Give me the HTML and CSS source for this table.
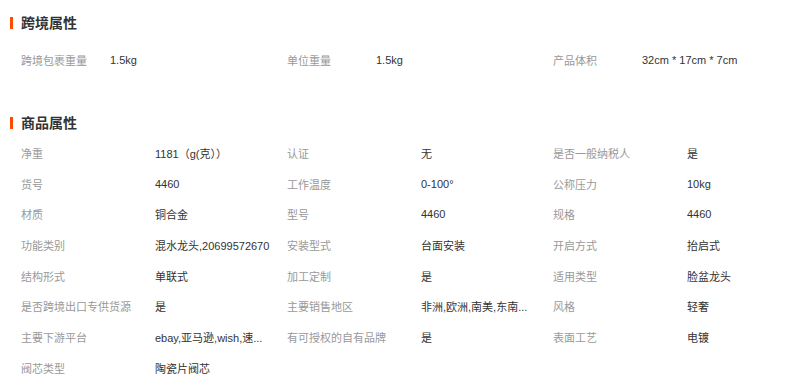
FILE: index.html
```html
<!DOCTYPE html>
<html lang="zh-CN">
<head>
<meta charset="utf-8">
<title>属性</title>
<link rel="stylesheet" href="styles.css">
</head>
<body>
<section class="block block-cross">
  <h2 class="title"><span class="bar"></span>跨境属性</h2>
  <div class="grid grid-cross">
    <div class="label">跨境包裹重量</div><div class="value">1.5kg</div>
    <div class="label">单位重量</div><div class="value">1.5kg</div>
    <div class="label">产品体积</div><div class="value">32cm * 17cm * 7cm</div>
  </div>
</section>
<section class="block block-goods">
  <h2 class="title"><span class="bar"></span>商品属性</h2>
  <div class="grid grid-goods">
    <div class="label">净重</div><div class="value">1181（g(克））</div>
    <div class="label">认证</div><div class="value">无</div>
    <div class="label">是否一般纳税人</div><div class="value">是</div>

    <div class="label">货号</div><div class="value">4460</div>
    <div class="label">工作温度</div><div class="value">0-100°</div>
    <div class="label">公称压力</div><div class="value">10kg</div>

    <div class="label">材质</div><div class="value">铜合金</div>
    <div class="label">型号</div><div class="value">4460</div>
    <div class="label">规格</div><div class="value">4460</div>

    <div class="label">功能类别</div><div class="value">混水龙头,20699572670</div>
    <div class="label">安装型式</div><div class="value">台面安装</div>
    <div class="label">开启方式</div><div class="value">抬启式</div>

    <div class="label">结构形式</div><div class="value">单联式</div>
    <div class="label">加工定制</div><div class="value">是</div>
    <div class="label">适用类型</div><div class="value">脸盆龙头</div>

    <div class="label">是否跨境出口专供货源</div><div class="value">是</div>
    <div class="label">主要销售地区</div><div class="value">非洲,欧洲,南美,东南...</div>
    <div class="label">风格</div><div class="value">轻奢</div>

    <div class="label">主要下游平台</div><div class="value">ebay,亚马逊,wish,速...</div>
    <div class="label">有可授权的自有品牌</div><div class="value">是</div>
    <div class="label">表面工艺</div><div class="value">电镀</div>

    <div class="label">阀芯类型</div><div class="value">陶瓷片阀芯</div>
  </div>
</section>
</body>
</html>
```
FILE: styles.css
```css
html, body {
  margin: 0;
  padding: 0;
  background: #ffffff;
}
body {
  font-family: "Liberation Sans", "Noto Sans CJK SC", sans-serif;
  font-size: 11px;
  color: #333333;
  width: 799px;
  height: 390px;
  overflow: hidden;
}
.title {
  display: flex;
  align-items: center;
  margin: 0;
  height: 20px;
  font-size: 14px;
  font-weight: bold;
  color: #333333;
  line-height: 20px;
}
.bar {
  display: block;
  width: 3px;
  height: 12px;
  margin-left: 10px;
  margin-right: 8px;
  background: #ff4a00;
}
.block-cross {
  padding-top: 13px;
}
.block-cross .grid {
  margin-top: 12px;
}
.block-goods {
  margin-top: 37px;
}
.block-goods .grid {
  margin-top: 5px;
}
.grid {
  display: grid;
  padding-left: 21px;
  grid-auto-rows: 30.7px;
  align-items: center;
}
.grid-cross {
  grid-template-columns: 89px 177px 89px 177px 89px 177px;
}
.grid-goods {
  grid-template-columns: 134px 132px 134px 132px 134px 132px;
}
.label {
  color: #999999;
  white-space: nowrap;
  overflow: hidden;
}
.value {
  color: #333333;
  white-space: nowrap;
  overflow: hidden;
  padding-right: 6px;
}
```
